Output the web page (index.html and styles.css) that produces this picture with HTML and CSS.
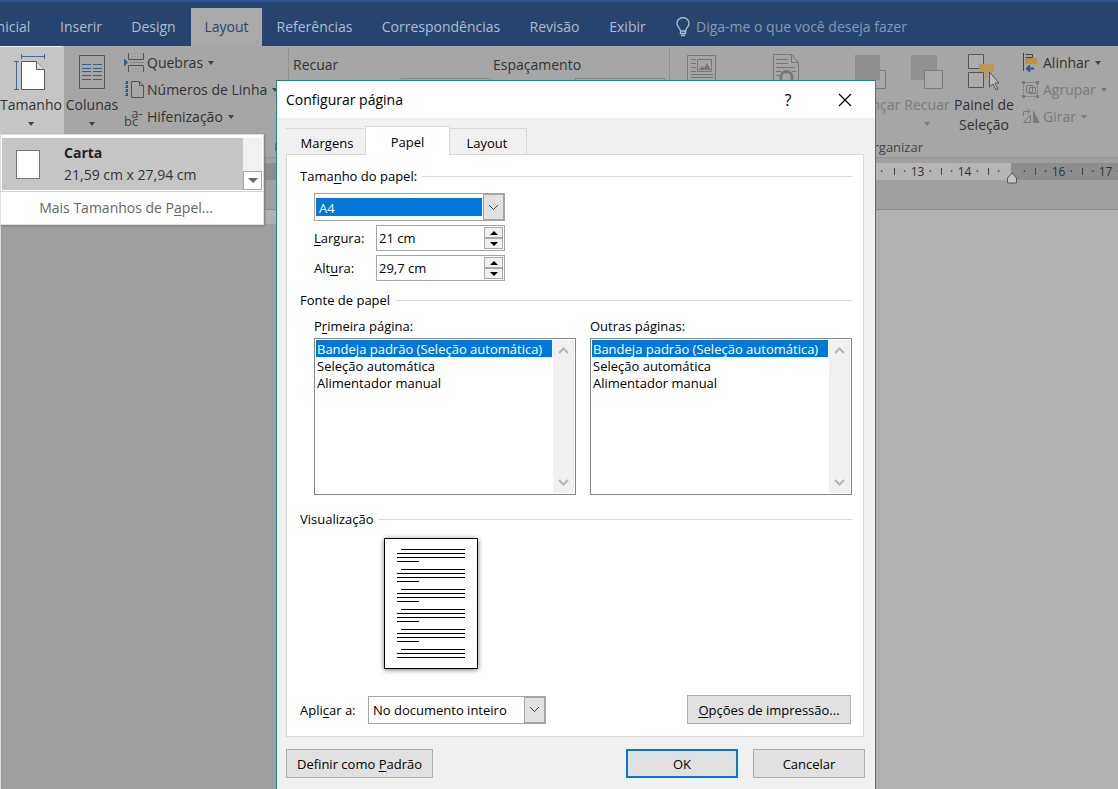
FILE: index.html
```html
<!DOCTYPE html>
<html lang="pt-BR">
<head>
<meta charset="utf-8">
<title>Configurar página</title>
<link rel="stylesheet" href="styles.css">
</head>
<body>
<div class="app">
  <header class="titlebar">
    <nav class="tabs">
      <button class="tab w-inicial">Inicial</button>
      <button class="tab w-inserir">Inserir</button>
      <button class="tab w-design">Design</button>
      <button class="tab w-layout active">Layout</button>
      <button class="tab w-ref">Referências</button>
      <button class="tab w-corr">Correspondências</button>
      <button class="tab w-rev">Revisão</button>
      <button class="tab w-exibir">Exibir</button>
    </nav>
    <button class="tell">
      <svg width="14" height="20" viewBox="0 0 14 20" fill="none" stroke="currentColor" stroke-width="1.3"><path d="M4.500 14c0-3-3.500-4-3.500-7.500a6 6 0 0 1 12 0c0 3.500-3.500 4.500-3.500 7.500zM4.500 14v2.500h5V14M5 18.500h4"/></svg>
      <span>Diga-me o que você deseja fazer</span>
    </button>
  </header>

  <section class="ribbon">
    <div class="group page-group">
      <button class="big open">
        <svg width="34" height="38" viewBox="0 0 34 38" fill="none"><path d="M7.500 2.500h23M7.500 0v5M30.500 0v5M2.500 7.500v28M0 7.500h5M0 35.500h5" stroke="#416a94"/><path d="M7.500 7.500h15l8 8v20h-23z" fill="#fff" stroke="#5a5a5a"/><path d="M22.500 7.500v8h8" fill="#ddd" stroke="#5a5a5a"/></svg>
        <span>Tamanho</span><i class="caret"></i>
      </button>
      <button class="big columns">
        <svg width="28" height="38" viewBox="0 0 28 38" fill="none"><path d="M1.500 1.500h25v33h-25z" stroke="#555"/><path d="M4 10.500h9M4 14.500h9M4 17.500h9M4 21.500h9M4 25.500h9M15 10.500h9M15 14.500h9M15 17.500h9M15 21.500h9M15 25.500h9" stroke="#365f8b"/></svg>
        <span>Colunas</span><i class="caret"></i>
      </button>
      <div class="stack">
        <button class="small">
          <svg width="20" height="20" viewBox="0 0 20 20" fill="none"><path d="M0 5.500l4 4-4 4z" fill="#315d8d"/><path d="M4.500 0v6.500h15V0M4.500 19v-6.500h15V19" stroke="#555"/><path d="M7 .5h10M7 3.500h10M7 15.500h10M7 18.500h10" stroke="#999" stroke-dasharray="2 1"/><path d="M6 9.500h14" stroke="#888"/></svg>
          <span>Quebras</span><i class="caret"></i></button>
        <button class="small">
          <svg width="20" height="20" viewBox="0 0 20 20" fill="none"><path d="M3 1v16" stroke="#315d8d" stroke-width="2" stroke-dasharray="3 1"/><path d="M1 3.500h2M1 7.500h2M1 11.500h2M1 15.500h2" stroke="#315d8d"/><path d="M7.500 1.500h8l4 4v12h-12zM15.500 1.500v4h4" stroke="#555"/></svg>
          <span>Números de Linha</span><i class="caret"></i></button>
        <button class="small">
          <span class="hyph"><i>bc</i><i class="raised">a-</i></span>
          <span>Hifenização</span><i class="caret"></i></button>
      </div>
      <svg class="launcher" width="9" height="9" viewBox="0 0 9 9" fill="none" stroke="#666"><path d="M.5 8V.5H8M4 4l4 4M8.500 4v4.500H4"/></svg>
    </div>
    <div class="group para-group">
      <span class="col">Recuar<i class="field"></i></span>
      <span class="col">Espaçamento<i class="field"></i></span>
    </div>
    <div class="group arrange">
      <div class="arrange-row">
        <svg class="pos" width="30" height="38" viewBox="0 0 30 38" fill="none" stroke="#777"><path d="M.5 1.500h28v30h-28zM4 5.500h5M4 9.500h5M4 13.500h5M4 17.500h5M4 20.500h22M4 23.500h22M10.500 5.500h14v12h-14z"/><path d="M12 16l3-4 2 2 3-5 4 7z" fill="#777" stroke="none"/></svg>
        <svg class="wrap" width="28" height="38" viewBox="0 0 28 38" fill="none" stroke="#777"><path d="M.5.5h18l7 8v26H.5zM18.500.5v8h7M3 5.500h12M3 9.500h12M3 13.500h19M3 17.500h5M19 17.500h4M3 21.500h4"/><path d="M8 26v-3a5.500 5.500 0 0 1 11 0v3" stroke-width="3"/></svg>
        <button class="big off forward">
          <svg width="38" height="38" viewBox="0 0 38 38"><path d="M12.500 16.500h18v18h-18z" fill="#a9a9a9" stroke="#7b7b7b"/><path d="M0 1h25v25H0z" fill="#8d8d8d"/></svg>
          <span>Avançar</span></button>
        <button class="big off back">
          <svg width="34" height="38" viewBox="0 0 34 38"><path d="M1 1h26v25H1z" fill="#919191"/><path d="M14.500 16.500h18v18h-18z" fill="#a9a9a9" stroke="#7b7b7b"/></svg>
          <span>Recuar</span><i class="caret"></i></button>
        <button class="big pane">
          <svg width="34" height="38" viewBox="0 0 34 38" fill="none"><path d="M1.500.5h15v14h-15zM1.500 18.500h15v15h-15z" fill="#adadad" stroke="#555"/><path d="M12 10h15v8h-6v6h-3v-6h-6z" fill="#bd9950"/><path d="M22.500 18v15l3.500-3 3 6 2-1-3-6h4z" fill="#bbb" stroke="#555"/></svg>
          <span>Painel de<br>Seleção</span></button>
        <div class="stack">
          <button class="small">
            <svg width="18" height="20" viewBox="0 0 18 20" fill="none"><path d="M1.500 0v18M3.500 1.500h7v3h-7" stroke="#444"/><path d="M3 5h12v6H3z" fill="#bd9144"/><path d="M12 15.500H5M8 12.500l-3 3 3 3" stroke="#2d5688" stroke-width="2"/></svg>
            <span>Alinhar</span><i class="caret"></i></button>
          <button class="small off">
            <svg width="18" height="20" viewBox="0 0 18 20" fill="none" stroke="currentColor"><path d="M1.500 2.500h14v14h-14z" stroke-dasharray="2 1"/><path d="M4.500 5.500h6v7h-6zM7.500 7.500h6v6h-6z"/><path d="M0 1h3v3H0zM14 1h3v3h-3zM0 15h3v3H0zM14 15h3v3h-3z" fill="currentColor" stroke="none"/></svg>
            <span>Agrupar</span><i class="caret"></i></button>
          <button class="small off">
            <svg width="18" height="20" viewBox="0 0 18 20" fill="none" stroke="currentColor"><path d="M1.500 9V4.500h6M5 1.500l3 3-3 3M8.500 8v7.500h-7z"/><path d="M11 3v13h7z" fill="currentColor" stroke="none"/></svg>
            <span>Girar</span><i class="caret"></i></button>
        </div>
      </div>
      <span class="group-name">Organizar</span>
    </div>
  </section>

  <div class="ruler-row">
    <div class="ruler">
      <span class="unit first"><i>·</i></span>
      <span class="unit"><i>·</i>13<i>·</i></span>
      <span class="unit"><i>·</i>14<i>·</i></span>
      <span class="unit split"><i>·</i><svg class="marker" width="12" height="12" viewBox="0 0 12 12"><path d="M1.500 11V6L6 1l4.500 5v5z" fill="#c4c4c4" stroke="#555"/></svg><i>·</i></span>
      <span class="unit dark"><i>·</i>16<i>·</i></span>
      <span class="unit dark"><i>·</i>17<i>·</i></span>
    </div>
  </div>
  <main class="document"><div class="shade"></div></main>
</div>

<div class="size-menu">
  <div class="size-row">
    <button class="size-item">
      <i class="sheet"></i>
      <span><b>Carta</b><br>21,59 cm x 27,94 cm</span>
    </button>
    <div class="menu-scroll"><button aria-label="Rolar"><i class="caret"></i></button></div>
  </div>
  <button class="more">Mais Tamanhos de P<u>a</u>pel...</button>
</div>

<div class="dialog" role="dialog" aria-labelledby="dlg-title">
  <div class="dlg-head">
    <h1 id="dlg-title">Configurar página</h1>
    <button class="help">?</button>
    <button class="close" aria-label="Fechar"><svg width="14" height="14" viewBox="0 0 14 14" stroke="#000" stroke-width="1.200"><path d="M1 1l12 12M13 1L1 13"/></svg></button>
  </div>
  <div class="dlg-body">
    <div class="dlg-tabs">
      <button class="dtab">Margens</button>
      <button class="dtab current">Papel</button>
      <button class="dtab">Layout</button>
    </div>
    <div class="panel">
      <h2>Tama<u>n</u>ho do papel:</h2>
      <div class="size-form">
        <div class="combo paper">
          <select aria-label="Tamanho do papel"><option>A4</option></select>
          <span class="drop"><svg width="11" height="7" viewBox="0 0 11 7" fill="none" stroke="#444"><path d="M1 1l4.500 4.500L10 1"/></svg></span>
        </div>
        <div class="line">
          <label for="larg"><u>L</u>argura:</label>
          <div class="spin"><input id="larg" type="text" value="21 cm"><div class="arrows"><button aria-label="Aumentar largura"><i class="up"></i></button><button aria-label="Diminuir largura"><i class="down"></i></button></div></div>
        </div>
        <div class="line">
          <label for="alt">Alt<u>u</u>ra:</label>
          <div class="spin"><input id="alt" type="text" value="29,7 cm"><div class="arrows"><button aria-label="Aumentar altura"><i class="up"></i></button><button aria-label="Diminuir altura"><i class="down"></i></button></div></div>
        </div>
      </div>
      <h2>Fonte de papel</h2>
      <div class="sources">
        <div class="source">
          <label for="first">P<u>r</u>imeira página:</label>
          <div class="list">
            <select id="first" size="9"><option selected>Bandeja padrão (Seleção automática)</option><option>Seleção automática</option><option>Alimentador manual</option></select>
            <div class="bar"><svg width="11" height="7" viewBox="0 0 11 7"><path d="M1 6l4.500-4.500L10 6"/></svg><svg width="11" height="7" viewBox="0 0 11 7"><path d="M1 1l4.500 4.500L10 1"/></svg></div>
          </div>
        </div>
        <div class="source">
          <label for="other">Outras pá<u>g</u>inas:</label>
          <div class="list">
            <select id="other" size="9"><option selected>Bandeja padrão (Seleção automática)</option><option>Seleção automática</option><option>Alimentador manual</option></select>
            <div class="bar"><svg width="11" height="7" viewBox="0 0 11 7"><path d="M1 6l4.500-4.500L10 6"/></svg><svg width="11" height="7" viewBox="0 0 11 7"><path d="M1 1l4.500 4.500L10 1"/></svg></div>
          </div>
        </div>
      </div>
      <h2>Visualização</h2>
      <svg class="preview" width="94" height="131" viewBox="0 0 94 131" fill="none" stroke="#000"><path fill="#fff" d="M.5.5h93v130H.5z"/><path d="M17 11.500h64M13 15.500h68M13 19.500h68M13 23.500h22M17 31.500h64M13 35.500h68M13 39.500h68M13 43.500h22M17 51.500h64M13 55.500h68M13 59.500h68M13 63.500h22M17 71.500h64M13 75.500h68M13 79.500h68M13 83.500h22M17 91.500h64M13 95.500h68M13 99.500h68M13 103.500h22M17 111.500h64M13 115.500h68M13 119.500h68"/></svg>
      <div class="apply">
        <label for="apply">Apli<u>c</u>ar a:</label>
        <div class="combo">
          <select id="apply"><option>No documento inteiro</option></select>
          <span class="drop"><svg width="11" height="7" viewBox="0 0 11 7" fill="none" stroke="#444"><path d="M1 1l4.500 4.500L10 1"/></svg></span>
        </div>
        <button class="btn print"><u>O</u>pções de impressão...</button>
      </div>
    </div>
    <div class="actions">
      <button class="btn default">Definir como <u>P</u>adrão</button>
      <button class="btn ok">OK</button>
      <button class="btn cancel">Cancelar</button>
    </div>
  </div>
</div>
</body>
</html>
```
FILE: styles.css
```css
* { box-sizing: border-box; }
html, body { height: 100%; margin: 0; }
body {
  position: relative;
  overflow: hidden;
  font: 14px/20px "Open Sans", "Noto Sans", sans-serif;
  color: #333;
  background: #b1b1b1;
}
button, input, select { font: inherit; color: inherit; }
button { margin: 0; padding: 0; border: 0; background: none; white-space: nowrap; }
i { font-style: normal; }
u { text-underline-offset: 2px; }
svg { display: block; flex: none; }

.app { display: flex; flex-direction: column; height: 100%; }
.titlebar {
  display: flex;
  height: 46px;
  padding-top: 6px;
  background: #27446f;
  border-top: 2px solid #2b5396;
  color: #b0bccd;
}
.tabs { display: flex; margin-left: -23px; }
.tab { height: 38px; }
.tab.active { background: #a9a9a9; color: #2a466f; }
.w-inicial { width: 69px; }
.w-inserir { width: 70px; }
.w-design { width: 75px; }
.w-layout { width: 71px; }
.w-ref { width: 105px; }
.w-corr { width: 148px; }
.w-rev { width: 79px; }
.w-exibir { width: 67px; }
.tell { display: flex; align-items: center; gap: 6px; margin-left: 15px; color: #8998b1; }
.tell svg { color: #b0bccd; }

.ribbon { display: flex; height: 112px; background: #a6a6a6; border-bottom: 1px solid #939393; }
.group { display: flex; }
.caret { display: block; border: 3px solid transparent; border-top: 4px solid #444; border-bottom: 0; }
.big { display: flex; flex-direction: column; align-items: center; padding-top: 8px; height: 88px; }
.big span { margin-top: 3px; }
.big .caret { margin-top: 7px; }
.big.open { width: 62px; background: #c5c5c5; border-top: 1px solid #eee; padding-top: 7px; box-shadow: 2px 0 #c5c5c5; }
.columns { width: 60px; }
.stack { display: flex; flex-direction: column; padding-top: 3px; }
.small { display: flex; align-items: center; height: 27px; gap: 3px; }
.small .caret { margin-left: 2px; }
.hyph { display: flex; align-items: flex-end; width: 20px; height: 22px; font-size: 13px; line-height: 14px; color: #444; }
.raised { align-self: flex-start; margin-left: -7px; }
.off { color: #7b7b7b; }
.off .caret { border-top-color: #7b7b7b; }
.page-group { width: 288px; }
.page-group .stack { width: 151px; padding-left: 2px; }
.launcher { align-self: flex-end; margin: 0 0 5px 2px; }
.para-group { width: 382px; border: solid #929292; border-width: 0 1px; padding: 7px 4px 0; height: 108px; margin-top: 2px; }
.col { display: flex; flex-direction: column; width: 200px; flex: none; }
.para-group .col:last-child { width: 172px; }
.field { width: 90px; height: 22px; margin: 3px 0 0 108px; border: 1px solid #8b8b8b; }
.para-group .col:last-child .field { margin-left: 82px; }
.arrange { flex-direction: column; flex: 1; }
.arrange-row { display: flex; height: 91px; padding-left: 17px; }
.pos, .wrap { margin-top: 8px; }
.wrap { margin-left: 56px; }
.forward { width: 60px; margin-left: 43px; }
.back { width: 50px; margin-left: -2px; }
.pane { width: 62px; margin: 0 7px 0 1px; }
.group-name { width: 75px; margin-left: 178px; text-align: right; font-size: 13px; color: #444; }

.ruler-row { display: flex; height: 52px; padding-top: 5px; background: #a0a0a0; border-bottom: 1px solid #8a8a8a; }
.ruler { display: flex; flex: 1; height: 17px; background: #b5b5b5; border-left: 276px solid #8d8d8d; padding-left: 595px; color: #333; font-size: 12px; line-height: 17px; }
.unit { display: flex; flex: none; align-items: center; justify-content: space-between; width: 47px; padding: 0 9px; background: linear-gradient(#444, #444) left center / 1px 7px no-repeat; }
.first { width: 23px; background: none; }
.dark { background-color: #8d8d8d; }
.split { background-image: linear-gradient(#444, #444), linear-gradient(to right, transparent 50%, #8d8d8d 50%); background-size: 1px 7px, 100% 100%; }
.marker { margin-top: 12px; }
.document { display: flex; flex: 1; background: #b1b1b1; }
.shade { width: 277px; margin-top: 14px; background: #9f9f9f; border-left: 1px solid #ddd; }

.size-menu { position: absolute; left: 0; top: 134px; width: 264px; background: #fff; border: 1px solid #ddd; box-shadow: 1px 1px 2px #777; }
.size-row { display: flex; padding: 3px 1px 1px; border-bottom: 1px solid #d2d2d2; }
.size-item { display: flex; flex: 1; align-items: center; gap: 24px; height: 52px; padding-left: 14px; background: #c5c5c5; text-align: left; line-height: 22px; }
.sheet { width: 24px; height: 29px; background: #fff; border: 1px solid #777; }
.size-item b { color: #222; }
.menu-scroll { display: flex; align-items: flex-end; width: 19px; background: #f1f1f1; }
.menu-scroll button { display: flex; align-items: center; justify-content: center; width: 19px; height: 19px; background: #fff; border: 1px solid #aaa; }
.menu-scroll .caret { border-width: 5px 5px 0; border-top-color: #666; }
.more { width: 100%; height: 32px; padding-right: 12px; color: #666; }

.dialog {
  position: absolute; left: 276px; top: 80px; bottom: 0; width: 600px;
  display: flex; flex-direction: column;
  border: 1px solid #23868b; border-bottom: 0;
  background: #f0f0f0; color: #000;
  font-size: 13px; line-height: 18px;
}
.dlg-head { display: flex; flex: none; align-items: center; height: 37px; padding: 0 23px 0 9px; background: #fff; }
h1 { flex: 1; margin: 0; font-size: 14px; line-height: 20px; font-weight: 400; }
.help { width: 20px; margin-right: 40px; font-size: 16px; }
.dlg-body { padding: 8px 11px 0 9px; }
.dlg-tabs { display: flex; align-items: flex-end; height: 28px; }
.dtab { width: 78px; height: 26px; padding-top: 2px; border: 1px solid #d9d9d9; border-bottom: 0; border-left: 0; }
.dtab:first-child { width: 79px; padding-left: 3px; border-right: 0; }
.dtab.current { width: 85px; height: 29px; margin-bottom: -1px; padding: 2px 0 0; background: #fff; border-left: 1px solid #d9d9d9; z-index: 1; }
.dtab:last-child { width: 77px; padding-right: 2px; }
.panel { padding: 12px 11px 12px 13px; background: #fff; border: 1px solid #d9d9d9; }
h2 { display: flex; align-items: center; margin: 0; font-size: 13px; font-weight: 400; line-height: 18px; white-space: pre; }
h2::after { content: ""; flex: 1; height: 1px; margin-left: 5px; background: #d9d9d9; }
.size-form { display: flex; flex-direction: column; gap: 4px; width: 205px; padding: 8px 0 10px 14px; }
.combo { display: flex; height: 28px; border: 1px solid #a5a5a5; background: #fff; }
.combo select { flex: 1; min-width: 0; appearance: none; border: 0; border-radius: 0; padding: 0 4px; background: none; outline: 0; }
.paper select { margin: 4px 1px; padding: 0 2px; background: #0078d7; color: #fff; border: 1px dotted #3f6f96; }
.drop { display: flex; align-items: center; justify-content: center; width: 21px; background: #e1e1e1; border: 1px solid #a5a5a5; }
.line { display: flex; align-items: center; justify-content: space-between; }
.spin { display: flex; width: 129px; height: 26px; border: 1px solid #a5a5a5; }
.spin input { flex: 1; min-width: 0; border: 0; padding: 0 2px; background: none; }
.arrows { display: flex; flex-direction: column; width: 20px; padding: 1px 1px 1px 0; }
.arrows button { display: flex; flex: 1; align-items: center; justify-content: center; background: #f0f0f0; border: 1px solid #aaa; }
.up, .down { border: 4px solid transparent; border-top: 0; border-bottom: 4px solid #000; }
.down { border-bottom: 0; border-top: 4px solid #000; }
.sources { display: flex; gap: 14px; padding: 8px 0 15px 14px; }
.source { flex: 1; }
.source label { display: block; padding-bottom: 3px; }
.list { display: flex; height: 157px; padding: 1px; border: 1px solid #828790; }
.list select { flex: 1; min-width: 0; height: 153px; margin-right: 1px; padding: 0; border: 0; border-radius: 0; outline: 0; overflow: hidden; background: #fff; }
.list option { min-height: 17px; height: 17px; padding: 0 1px; line-height: 17px; color: #000; }
.list option:checked { background: #0078d7 linear-gradient(#0078d7, #0078d7); color: #fff; }
.bar { display: flex; flex-direction: column; align-items: center; justify-content: space-between; width: 21px; padding: 7px 0; background: #f0f0f0; }
.bar path { fill: none; stroke: #b5b5b5; stroke-width: 2; }
.preview { margin: 10px 0 26px 84px; box-shadow: 0 1px 5px #777; }
.apply { display: flex; align-items: center; }
.apply label { width: 68px; }
.apply .combo { width: 178px; }
.btn { height: 29px; border: 1px solid #adadad; background: #e1e1e1; }
.print { width: 164px; margin-left: auto; margin-right: 1px; }
.actions { display: flex; padding: 12px 0 10px; margin-right: -1px; }
.default { width: 147px; }
.ok { width: 112px; margin: 0 15px 0 auto; border: 2px solid #0078d7; }
.cancel { width: 112px; }
```
